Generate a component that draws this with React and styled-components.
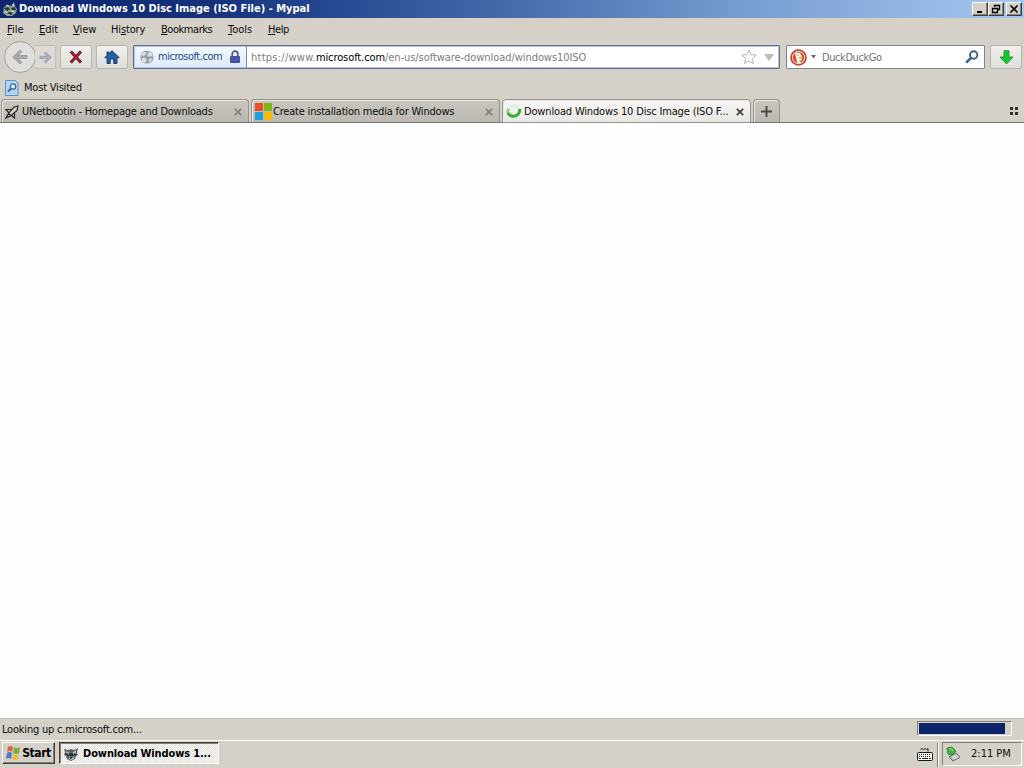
import React from 'react';
import styled, { createGlobalStyle, css } from 'styled-components';

const Global = createGlobalStyle`
  * { box-sizing: border-box; }
  html, body { margin: 0; padding: 0; overflow: hidden; }
  body { font-family: "DejaVu Sans Condensed", "DejaVu Sans", sans-serif; font-stretch: condensed; font-size: 11px; color: #0c0c0c; }
  svg { display: block; flex: none; }
`;
const Screen = styled.div`
  width: 1024px; height: 768px; display: flex; flex-direction: column; background: #d5d0c8;
`;
const Label = styled.span`
  flex: none; display: block; width: ${p => p.$w}px; white-space: nowrap; line-height: 14px;
  letter-spacing: ${p => p.$ls || 0}px; margin-left: ${p => p.$ml || 0}px;
  color: ${p => p.$color || 'inherit'}; font-weight: ${p => (p.$bold ? 700 : 400)};
  b { font-weight: 400; color: #000; letter-spacing: -.1px; }
`;
const Url = styled(Label)`padding-top: 1px; em { font-style: normal; letter-spacing: .25px; }`;
const TitleBar = styled.header`
  height: 18px; padding: 0 2px 0 3px; display: flex; align-items: center; color: #fff;
  background: linear-gradient(90deg, #0c2670 0, #14317a 20%, #274a92 33%, #4268aa 48%, #769bd0 72%, #a5c9f0 100%);
`;
const Grow = styled.div`flex: 1;`;
const WinButton = styled.button`
  width: 16px; height: 14px; padding: 0; margin-left: ${p => p.$ml || 0}px; display: flex; align-items: center; justify-content: center;
  background: #d5d0c8; border: 1px solid; border-color: #fff #404040 #404040 #fff; box-shadow: inset -1px -1px #85817a;
`;
const MenuBar = styled.nav`
  height: 23px; padding: 0 7px; display: flex; align-items: center; gap: 16px;
`;
const NavBar = styled.div`
  height: 32px; padding: 0 2px 0 4px; display: flex; align-items: center;
`;
const BackButton = styled.button`
  flex: none; width: 32px; height: 32px; padding: 0; border-radius: 50%; border: 1px solid #a5a29d; background: #e0dedb;
  display: flex; align-items: center; justify-content: center;
`;
const ToolButton = styled.button`
  flex: none; width: ${p => p.$w}px; height: 24px; padding: 0; margin-left: ${p => p.$ml}px; display: flex; align-items: center; justify-content: center;
  border: 1px solid #b8b4ae; border-radius: 2px; background: linear-gradient(#f0efed, #e0deda);
  ${p => p.$forward && css`border-left: 0; border-color: #c4c0ba; background: #dddad6;`}
`;
const Field = styled.div`
  flex: none; width: ${p => p.$w}px; height: 24px; margin-left: ${p => p.$ml}px; display: flex; align-items: center;
  background: #fff; border: 1px solid #85838a; border-radius: 1px;
  ${p => p.$focus && css`border-color: #616d92; box-shadow: inset 0 0 0 1px #b5c5e2;`}
`;
const Identity = styled.div`
  width: 113px; height: 22px; padding-left: 6px; display: flex; align-items: center;
  background: linear-gradient(#f2f8ff, #deebfb); border-right: 1px solid #788bae; box-shadow: inset 1px 1px #b5c5e2, inset 0 -1px #b5c5e2;
`;
const BookmarkBar = styled.div`
  height: 26px; padding: 3px 0 0 5px; display: flex; align-items: center;
`;
const TabStrip = styled.div`
  height: 24px; padding-left: 1px; display: flex; align-items: flex-end; border-bottom: 1px solid #777572;
`;
const Tab = styled.div`
  flex: none; width: ${p => p.$w}px; height: ${p => (p.$active ? 24 : 23)}px; margin: 0 2px ${p => (p.$active ? -1 : 0)}px 0;
  padding: 1px 0 0 ${p => p.$pl}px; display: flex; align-items: center;
  background: ${p => (p.$active ? 'linear-gradient(#f8f7f5, #e9e7e3)' : 'linear-gradient(#cac6c0, #bbb8b2)')};
  border: 1px solid #96938f; border-bottom-width: ${p => (p.$active ? 1 : 0)}px; border-radius: 4px 4px 0 0;
  box-shadow: inset 1px 1px #eae8e4;
`;
const GroupButton = styled.div`
  display: grid; grid-template-columns: 3px 3px; gap: 2px; margin: 0 6px 7px 0;
`;
const Dot = styled.i`height: 3px; background: #33302c;`;
const Page = styled.main`height: 595px; background: #fefefe;`;
const StatusBar = styled.footer`
  height: 22px; padding: 0 12px 0 2px; display: flex; align-items: center; justify-content: space-between; border-top: 1px solid #c5c1ba;
`;
const Progress = styled.div`
  width: 95px; height: 15px; padding: 1px; margin-top: -3px; border: 1px solid; border-color: #85817a #fff #fff #85817a;
`;
const ProgressFill = styled.div`width: 86px; height: 11px; background: #0a246a;`;
const TaskBar = styled.footer`
  height: 28px; padding: 0 2px 0 1px; display: flex; align-items: center; border-top: 1px solid #fff;
`;
const StartButton = styled.button`
  width: 53px; height: 22px; padding: 0 0 0 2px; margin-left: 1px; align-self: flex-start; margin-top: 1px; display: flex; align-items: center; font: inherit; font-size: 12px; color: #000;
  background: #d5d0c8; border: 1px solid; border-color: #fff #404040 #404040 #fff; box-shadow: inset -1px -1px #85817a;
`;
const TaskButton = styled.button`
  width: 160px; height: 22px; padding: 2px 0 0 4px; margin: 1px 0 0 4px; align-self: flex-start; display: flex; align-items: center; font: inherit; color: #000;
  background: repeating-conic-gradient(#fff 0 25%, #dfdbd5 0 50%) 0 0 / 2px 2px;
  border: 1px solid; border-color: #404040 #fff #fff #404040; box-shadow: inset 1px 1px #85817a;
`;
const TrayDivider = styled.div`
  width: 2px; height: 24px; margin-left: 4px; border-left: 1px solid #85817a; border-right: 1px solid #fff;
`;
const Tray = styled.div`
  width: 80px; height: 24px; padding-left: 3px; margin: -1px 0 0 3px; display: flex; align-items: center;
  border: 1px solid; border-color: #85817a #fff #fff #85817a;
`;

const Svg = styled.svg`margin-left: ${p => p.$ml || 0}px;`;
const Raccoon = () => (
  <svg width="14" height="14" viewBox="0 0 14 14">
    <path d="M0 2l4 1 3-1 3 1 4-2-1 5 1 2-2 1-1 3-4 2-4-2-1-3-2-1 1-3z" fill="#566168" />
    <path d="M2 4l4 2-3 2zM12 3L8 6l4 1zM5 9l2 2 3-2v3l-3 1-2-1z" fill="#b5beba" />
    <path d="M1 7l5-1 1 1 1-1 5 1-3 2-3 0-3 0zM5 10h4l-2 2z" fill="#202b30" />
    <path d="M4 7h1M9 7h1" stroke="#e7eeee" />
  </svg>
);
const AppLogo = () => (
  <svg width="14" height="14" viewBox="0 0 14 14">
    <path d="M1 5l4-2 3 1 3-4 1 4 2 3-1 4-4 3-5 0-4-3z" fill="#8e9d94" />
    <path d="M1 6l4-1 2 2-3 2zM8 6l4-1 1 3-4 0zM4 11l3-1 3 1-2 2z" fill="#26343d" />
    <path d="M3 3l3 1M10 2l1 2M2 9l2 2M8 9l3 1" stroke="#dce5d9" />
  </svg>
);
const Arrow = ({ flip }) => (
  <svg width={flip ? 13 : 16} height={flip ? 13 : 16} viewBox="0 0 16 16">
    <g transform={flip ? 'matrix(-1 0 0 1 16 0)' : undefined}>
      <path d="M.8 8L8 1l1.800 1.800-3.600 3.700H15v3H6.200l3.600 3.700L8 15z" fill={flip ? '#a8b0ba' : '#a7a9ab'} stroke={flip ? '#8e98a5' : '#8c8e91'} strokeWidth=".7" />
    </g>
  </svg>
);
const Stop = () => (
  <svg width="14" height="14" viewBox="0 0 14 14"><path d="M1.800 1.500L12 12.500M12 1.500L1.800 12.500" stroke="#3d1724" strokeWidth="3" /><path d="M2.400 2L11.500 12M11.500 2L2.400 12" stroke="#b52034" strokeWidth="1.700" /></svg>
);
const Home = () => (
  <svg width="16" height="14" viewBox="0 0 16 14"><path d="M8 .7L15.300 7.700H13V13.500H9.700V9H6.300v4.500H3V7.700H.7L3 5.400V2h2v1.500z" fill="#2360a7" stroke="#17376c" strokeWidth=".9" /></svg>
);
const Globe = () => (
  <svg width="14" height="14" viewBox="0 0 14 14"><circle cx="7" cy="7" r="6.600" fill="#989fa6" /><path d="M2 3l3-1 2 1-2 2-2 1-2-1zM8 1l4 2 1 4-2-1-2 1-2-2 2-2zM2 8l3 0 2 2-2 3-3-2zM9 9l3-1-1 3-2 2z" fill="#dce1e5" /></svg>
);
const Lock = () => (
  <Svg $ml="7" width="12" height="14" viewBox="0 0 12 14"><path d="M3.200 7V4a2.800 2.800 0 0 1 5.600 0v3" fill="none" stroke="#505a88" strokeWidth="1.700" /><rect x="1" y="6" width="10" height="7" rx="1" fill="#4450a6" /><path d="M2 8h8M2 10h8" stroke="#5865b6" strokeWidth=".6" /></Svg>
);
const Star = () => (
  <svg width="16" height="16" viewBox="0 0 16 16"><path d="M8 .9l2.100 4.700 5.100.5-3.800 3.400 1.100 5L8 11.900l-4.500 2.600 1.100-5L.8 6.100l5.100-.5z" fill="#fff" stroke="#b2b4b8" /></svg>
);
const Down = ({ ml, s, color }) => (
  <Svg $ml={ml} width={s} height={s * .7} viewBox="0 0 10 7"><path d="M0 0h10L5 7z" fill={color} /></Svg>
);
const Duck = () => (
  <svg width="17" height="17" viewBox="0 0 17 17">
    <circle cx="8.500" cy="8.500" r="7.600" fill="#d84a32" stroke="#be3f30" strokeWidth="1.400" />
    <circle cx="8.500" cy="8.500" r="6.100" fill="none" stroke="#fff0eb" />
    <path d="M5 4.500q4-2.500 6.500 1.500l.2 5-1 3.200H7.500L5.800 8z" fill="#fff8ef" />
    <path d="M8.500 8l4-.6-.5 2-3 .5z" fill="#efc02c" /><path d="M9 11.500l3 0v2l-2-.5z" fill="#5ca34c" /><circle cx="8" cy="6" r=".6" fill="#554641" />
  </svg>
);
const Magnifier = () => (
  <svg width="14" height="14" viewBox="0 0 14 14"><circle cx="8.700" cy="5" r="3.700" fill="none" stroke="#36648c" strokeWidth="1.900" /><path d="M6 7.800L1.200 12.700" stroke="#36648c" strokeWidth="2.600" /></svg>
);
const Download = () => (
  <svg width="15" height="15" viewBox="0 0 15 15"><path d="M5 .7h5v6.300h4l-6.500 7L1 7h4z" fill="#12c92e" stroke="#168a2c" strokeWidth=".8" /></svg>
);
const Visited = () => (
  <svg width="14" height="16" viewBox="0 0 14 16"><path d="M.5.500h10L13 3v12.500H.5z" fill="#b5d4ee" stroke="#5e91c0" /><circle cx="8" cy="6.500" r="2.700" fill="#dceffc" stroke="#306da7" strokeWidth="1.300" /><path d="M6 8.500L3 11.500" stroke="#306da7" strokeWidth="2" /></svg>
);
const Rocket = () => (
  <svg width="14" height="14" viewBox="0 0 14 14"><path d="M13 1L9 2 3.600 8.200l2.400 2.400L12 5.500zM6.500 4.500H1L3.600 7.500M9.500 7.800v5.200L6.600 10.500M3.600 8.200L1 13l5-2.400" fill="#e5e2dc" fillOpacity=".4" stroke="#292725" strokeWidth="1.200" /></svg>
);
const MsLogo = () => (
  <svg width="17" height="17" viewBox="0 0 17 17"><path d="M0 0h8v8H0z" fill="#ee4f26" /><path d="M9 0h8v8H9z" fill="#7eb817" /><path d="M0 9h8v8H0z" fill="#199fdf" /><path d="M9 9h8v8H9z" fill="#fbb80b" /></svg>
);
const Spinner = () => (
  <svg width="16" height="16" viewBox="0 0 16 16"><circle cx="8" cy="8" r="6.300" fill="none" stroke="#dcefd9" strokeWidth="2.400" /><path d="M2.600 4.800A6.300 6.300 0 0 0 2 10" fill="none" stroke="#93cf91" strokeWidth="2.800" /><path d="M1.900 9A6.300 6.300 0 0 0 13.600 5" fill="none" stroke="#36ad3b" strokeWidth="3" /></svg>
);
const Close = ({ color = '#85827e', ml }) => (
  <Svg $ml={ml} width="8" height="8" viewBox="0 0 8 8"><path d="M.8.8l6.400 6.400M7.200.8L.8 7.200" stroke={color} strokeWidth="1.800" /></Svg>
);
const Flag = () => (
  <svg width="16" height="16" viewBox="0 0 16 16"><path d="M3 2q3-2 5 0L7 7Q5 5 2 7z" fill="#dd6840" /><path d="M9 2q3 2 6 0l-1 6q-3 2-6 0z" fill="#80ae48" /><path d="M2 8q3-2 5 0l-1 6q-3-2-5 0z" fill="#5078c6" /><path d="M8 9q3 2 6 0l-1 5q-3 2-6 0z" fill="#e7bc42" /></svg>
);
const Keyboard = () => (
  <svg width="16" height="15" viewBox="0 0 16 15"><path d="M3.500 2.500l1.500-1 1.500 1 1.500-1 1.500 1 1.500-1v3" fill="none" stroke="#222" /><rect x=".5" y="5.500" width="15" height="8" rx="1" fill="#f8f8f5" stroke="#151515" /><path d="M2 7.500h12M2 9.500h12" stroke="#222" strokeDasharray="1 1" /><path d="M2 11.500h2M5 11.500h6M12 11.500h2" stroke="#222" /></svg>
);
const Device = () => (
  <svg width="16" height="16" viewBox="0 0 16 16"><path d="M3 11l7-4 4 4-7 4z" fill="#b3b9b4" stroke="#636b66" /><path d="M6 11.500l5-2.500M7.500 13l5-2.500" stroke="#f2f4f1" /><path d="M1 2l5-1 2 2 2 2-4 4-4-1z" fill="#42b33f" stroke="#287a2b" strokeWidth=".8" /><path d="M3 3l3 0 1 2" fill="none" stroke="#a5e59a" /></svg>
);

const MENUS = [['File', 16], ['Edit', 18], ['View', 22], ['History', 34, 2, -.15], ['Bookmarks', 51, 0, -.45], ['Tools', 24], ['Help', 21, 0, -.4]];

export default function App() {
  return (
    <Screen>
      <Global />
      <TitleBar>
        <AppLogo />
        <Label $bold $w={292} $ml={2}>Download Windows 10 Disc Image (ISO File) - Mypal</Label>
        <Grow />
        <WinButton><svg width="10" height="8"><path d="M2 6h5v2H2z" /></svg></WinButton>
        <WinButton><svg width="10" height="10"><path d="M3.500 3V1.500h5v4H7M3 1.500h6M1.500 4.500h5v4h-5zM1 4.500h6" fill="none" stroke="#000" strokeWidth="1.300" /></svg></WinButton>
        <WinButton $ml={2}><svg width="10" height="8"><path d="M1.500.5l7 7M8.500.5l-7 7" stroke="#000" strokeWidth="1.600" /></svg></WinButton>
      </TitleBar>
      <MenuBar>
        {MENUS.map(([name, w, key = 0, ls]) => (
          <Label key={name} $w={w} $ls={ls}>{name.slice(0, key)}<u>{name[key]}</u>{name.slice(key + 1)}</Label>
        ))}
      </MenuBar>
      <NavBar>
        <BackButton><Arrow /></BackButton>
        <ToolButton $w={21} $ml={-1} $forward><Arrow flip /></ToolButton>
        <ToolButton $w={32} $ml={4}><Stop /></ToolButton>
        <ToolButton $w={32} $ml={4}><Home /></ToolButton>
        <Field $w={647} $ml={5} $focus>
          <Identity><Globe /><Label $w={64} $ml={4} $ls={-.48} $color="#234b8c">microsoft.com</Label><Lock /></Identity>
          <Url $w={336} $ml={4} $ls={-.06} $color="#7d7d7d"><em>https://www.</em><b>microsoft.com</b>/en-us/software-download/windows10ISO</Url>
          <Grow /><Star /><Down s={10} ml={7} color="#bbbcc0" /><Svg width="5" height="1" />
        </Field>
        <Field $w={199} $ml={6}>
          <Svg width="3" height="1" /><Duck /><Down s={5} ml={4} color="#666" />
          <Url $w={60} $ml={6} $ls={-.42} $color="#747474">DuckDuckGo</Url>
          <Grow /><Magnifier /><Svg width="5" height="1" />
        </Field>
        <ToolButton $w={32} $ml={5}><Download /></ToolButton>
      </NavBar>
      <BookmarkBar><Visited /><Label $w={58} $ml={5} $ls={-.2}>Most Visited</Label></BookmarkBar>
      <TabStrip>
        <Tab $w={248} $pl={3}><Rocket /><Label $w={212} $ml={3} $ls={-.24}>UNetbootin - Homepage and Downloads</Label><Close /></Tab>
        <Tab $w={249} $pl={3}><MsLogo /><Label $w={212} $ml={1} $ls={-.2}>Create installation media for Windows</Label><Close /></Tab>
        <Tab $w={249} $pl={3} $active><Spinner /><Label $w={211} $ml={2} $ls={-.16}>Download Windows 10 Disc Image (ISO F...</Label><Close ml={1} color="#454340" /></Tab>
        <Tab $w={27} $pl={7}><svg width="11" height="11"><path d="M5.500 0v11M0 5.500h11" stroke="#4c4a47" strokeWidth="2" /></svg></Tab>
        <Grow /><GroupButton><Dot /><Dot /><Dot /><Dot /></GroupButton>
      </TabStrip>
      <Page />
      <StatusBar><Label $w={141} $ls={-.2}>Looking up c.microsoft.com...</Label><Progress><ProgressFill /></Progress></StatusBar>
      <TaskBar>
        <StartButton><Flag /><Label $bold $w={29} $ml={1} $ls={-.4}>Start</Label></StartButton>
        <TaskButton><Raccoon /><Label $bold $w={128} $ml={5} $ls={-.13}>Download Windows 1...</Label></TaskButton>
        <Grow /><Keyboard /><TrayDivider />
        <Tray><Device /><Label $w={40} $ml={9}>2:11 PM</Label></Tray>
      </TaskBar>
    </Screen>
  );
}
